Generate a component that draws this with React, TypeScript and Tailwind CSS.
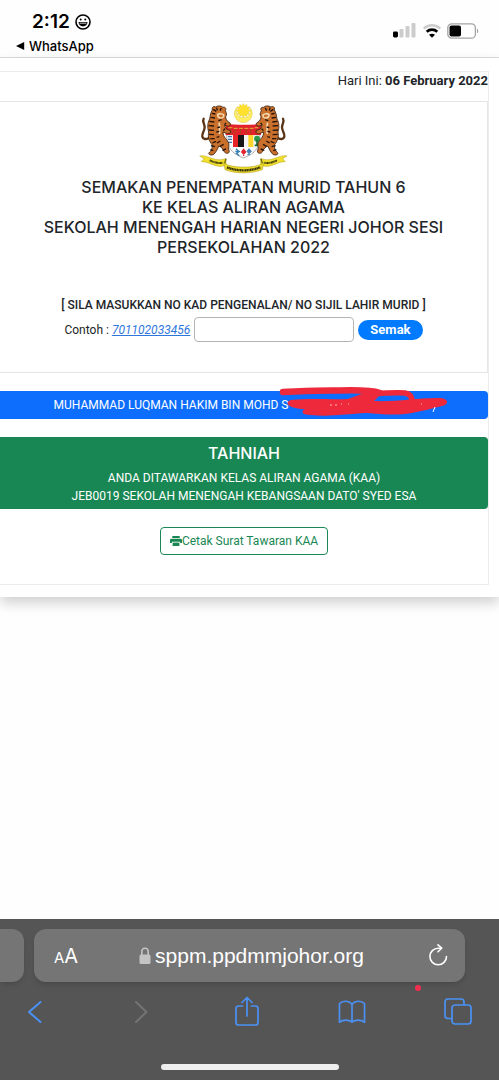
import { useState } from 'react';

function StatusBar() {
  return (
    <header className="flex h-[58px] justify-between border-b border-[#dcdcdc] pl-4 pr-5">
      <div className="pt-3">
        <div className="flex items-center gap-1 pl-4 text-[19px] font-semibold leading-5">
          <span>2:12</span>
          <svg width="18" height="18" viewBox="0 0 18 18" fill="none">
            <circle cx="9" cy="9" r="7" stroke="#000" strokeWidth="1.6" />
            <circle cx="6.7" cy="6.4" r="1" fill="#000" />
            <circle cx="11.3" cy="6.4" r="1" fill="#000" />
            <path d="M4.500 9h9c0 2.800-2 4.400-4.500 4.400S4.500 11.800 4.500 9z" fill="#000" />
            <path d="M5.6 10.200h6.8" stroke="#fff" strokeWidth=".8" />
          </svg>
        </div>
        <a href="#whatsapp" className="flex items-center gap-1 pt-1 text-[13px] font-medium leading-5">
          <svg width="9" height="8" viewBox="0 0 9 8">
            <path d="M0 4 8.2 0v8z" fill="#000" />
          </svg>
          WhatsApp
        </a>
      </div>
      <div className="flex items-center gap-1.5 pt-1">
        <svg width="24" height="15" viewBox="0 0 24 15">
          <rect x="0" y="8.5" width="5" height="6" rx="1.4" fill="#000" />
          <rect x="6.5" y="6" width="4" height="8.5" rx="1" fill="#ccc" />
          <rect x="12.5" y="3" width="4" height="11.5" rx="1" fill="#ccc" />
          <rect x="18.5" y="0" width="4" height="14.5" rx="1" fill="#ccc" />
        </svg>
        <svg width="18" height="14" viewBox="0 0 18 14" fill="none">
          <path d="M.8 4.5c4.6-4.3 11.8-4.3 16.4 0" stroke="#ccc" strokeWidth="2.4" />
          <path d="M3.7 7.7c3-2.8 7.6-2.8 10.6 0" stroke="#000" strokeWidth="2.6" />
          <path d="m9 13.8-3-3c1.7-1.5 4.3-1.5 6 0z" fill="#000" />
        </svg>
        <svg width="32" height="16" viewBox="0 0 32 16" fill="none">
          <rect x=".8" y=".8" width="27.6" height="14.4" rx="4" stroke="#a3a3a3" strokeWidth="1.3" />
          <rect x="2.5" y="2.5" width="11.5" height="11" rx="2" fill="#000" />
          <path d="M30 5.5c1.6.8 1.6 4.2 0 5z" fill="#a3a3a3" />
        </svg>
      </div>
    </header>
  );
}

function Tiger() {
  return (
    <g>
      <path d="M68 70c-5 8 3 16 3 26 0 11-9 17-7 28 2 7 9 9 18 5" fill="none" stroke="#5a3417" strokeWidth="7" strokeLinecap="round" />
      <path
        d="M94 44c-2-9 4-13 10-9 8-5 17-4 22 1 7-2 11 4 7 10 4 8 5 12 1 18 0 6 2 9 6 14l8 6c2 7-4 10-10 8l-8-3 6 12 12 5c3 6-2 10-9 9l-13-5c0 8 3 14 8 20 9 9 12 17 8 27l3 13c-4 6-13 5-16-2-3-9-9-13-16-16-3 10-9 20-16 26-9 3-18-1-11-8 6-4 8-12 8-21-10-12-14-25-11-39-4-13-4-27 3-39 2-11 3-20 8-27z"
        fill="#c8702c"
        stroke="#3a200d"
        strokeWidth="2.5"
      />
      <path d="M110 58c4-4 14-4 18 1 1 6-3 9-9 9-6-1-9-4-9-10zM114 82c4 10 0 22 2 34" fill="none" stroke="#f4d8ae" strokeWidth="5" />
      <path
        d="M97 42l9 6M107 37l2 8M121 38l-4 8M93 54l10 2M89 66l13 2M85 78l15 2M83 91l16 1M83 104l16 1M84 117l15 1M88 130l13 0M94 143l11-5M108 143l10-6M117 153l11-6M124 165l11-4M112 76l10-3M131 88l4-5M109 97l8-2M127 106l5-6M106 110l9-2M102 154l-12-3M97 166l-9-3M107 126l8-2"
        stroke="#24130a"
        strokeWidth="4"
      />
    </g>
  );
}

function Crest() {
  return (
    <svg width="94" height="72" viewBox="48 20 282 216" role="img" aria-label="Jata Negara">
      <path d="M170 34a27 27 0 1 0 34 0c10 15 2 33-17 33s-27-18-17-33z" fill="#ffee62" stroke="#d5c652" strokeWidth="1.5" />
      <path
        d="m187 24 4 7 7-4 0 8 8 0-4 7 7 4-7 4 4 7-8 0 0 7-7-4-4 7-4-7-7 4 0-7-8 0 4-7-7-4 7-4-4-7 8 0 0-8 7 4z"
        fill="#ffe02c"
        stroke="#d8c63a"
        strokeWidth="1"
      />
      <path d="M137 118h100c1 36-12 56-50 70-37-14-51-34-50-70z" fill="#f7f7f7" stroke="#8c8c8c" strokeWidth="2" />
      <path d="M134 86c30 3 76 3 106 0v33H134z" fill="#e3212b" />
      <path d="M148 96l5 19M164 96l-3 19M179 96v19M196 96v19M211 95l-2 19M227 95l-3 19" stroke="#9c4a1d" strokeWidth="3" />
      <path d="M142 97h12M158 99h12M174 99h12M190 99h12M206 99h12M221 97h11" stroke="#e5b03a" strokeWidth="3" />
      <path d="M156 119h15v36h-15z" fill="#e52329" />
      <path d="M171 119h18v36h-18z" fill="#171717" />
      <path d="M189 119h13v36h-13z" fill="#f4f4f4" />
      <path d="M202 119h15v36h-15z" fill="#fbd72b" />
      <path d="M141 124h12M141 132h12M142 141h11" stroke="#3c78b5" strokeWidth="4" />
      <circle cx="228" cy="130" r="9" fill="#2b9b49" />
      <path d="M228 133v15M221 150h12" stroke="#167134" strokeWidth="5" />
      <path d="M157 155h60c-5 14-14 24-30 30-16-6-26-16-30-30z" fill="#fff" />
      <path d="M165 160l9 9-8 5 9 7M163 168h14" stroke="#3a80b5" strokeWidth="4" fill="none" />
      <path d="M188 162l6 8-6 6-6-6zM188 174v8" fill="#e6252f" stroke="#df2732" strokeWidth="4" />
      <path d="M204 160l7 8-7 7-6-7zM199 178h8" fill="#477fbd" stroke="#397bad" strokeWidth="3" />
      <Tiger />
      <g transform="matrix(-1 0 0 1 374 0)">
        <Tiger />
      </g>
      <path
        d="M56 182c15-4 31 6 47 10 12 3 22 0 32-2v19c-9 4-18 6-27 3-17-4-31-14-47-13l8-9zM318 182c-15-4-31 6-47 10-12 3-22 0-32-2v19c9 4 18 6 27 3 17-4 31-14 47-13l-8-9z"
        fill="#f1df2d"
        stroke="#b4a320"
        strokeWidth="1.5"
      />
      <path d="M128 201c14 12 36 14 60 14s46-2 60-14l-4 22c-34 13-78 13-112 0z" fill="#eedb2b" stroke="#a59619" strokeWidth="1.5" />
      <path d="M135 190l-4 14M240 190l4 14" stroke="#736b10" strokeWidth="4" />
      <path d="M86 195c14 6 26 10 39 7M250 202c13 3 25-1 38-7" fill="none" stroke="#37320c" strokeWidth="6" strokeDasharray="3 1" />
      <path d="M138 216c30 12 70 12 100 0" fill="none" stroke="#37320c" strokeWidth="7" strokeDasharray="4 1" />
    </svg>
  );
}

// marker strokes over the rest of the name
function Scribble() {
  return (
    <svg className="absolute -left-3 -top-2 h-8 w-[176px]" viewBox="0 0 176 32" fill="none" aria-hidden="true">
      <path d="M7 5C30 4 45 3 64 3.500C83 3 98 4 104 6" stroke="#ee293c" strokeWidth="6.500" strokeLinecap="round" />
      <path d="M90 7C108 6 122 5 129 6C134 7 136 10 136 14" stroke="#ee293c" strokeWidth="5.500" strokeLinecap="round" />
      <path
        d="M72 12L88 6L104 8L98 14C120 15 140 11 160 11C173 10 174 17 166 19C155 22 145 24 136 26C120 29 104 27 91 26C70 27 53 30 35 28C25 28 25 24 29 22C14 22 7 16 15 13C36 11 57 13 72 12Z"
        fill="#ee293c"
      />
      <path d="M54 18h2M59 18h2M65 17h1M72 17h1M145 17h1" stroke="#fbb" strokeWidth="1" />
      <path d="M159 20l-2 5" stroke="#fff" strokeWidth="1" />
    </svg>
  );
}

function Printer() {
  return (
    <svg width="12" height="10" viewBox="0 0 12 10" fill="currentColor">
      <path d="M2.300 0h7.400v2H2.300z" />
      <path d="M1.500 2.800h9c.9 0 1.500.6 1.500 1.400v2.900h-1.900V5.800H1.900v1.300H0V4.200c0-.8.6-1.400 1.500-1.400z" />
      <path d="M2.600 6.600h6.800V10H2.600z" />
    </svg>
  );
}

function BrowserBar() {
  return (
    <footer className="flex h-[161px] flex-col overflow-hidden bg-[#555] text-white">
      <div className="flex pt-[10px]">
        <div className="h-[53px] w-6 rounded-r-xl bg-[#757575] shadow-md" />
        <div className="ml-[10px] mr-[34px] flex h-[53px] flex-1 items-center justify-between rounded-xl bg-[#757575] pl-5 pr-4 shadow-md">
          <button type="button" aria-label="AA" className="flex w-7 items-baseline">
            <span className="text-[15px]">A</span>
            <span className="text-xl">A</span>
          </button>
          <div className="flex items-center gap-1 font-['Liberation_Sans',sans-serif] text-[21px]">
            <svg width="12" height="18" viewBox="0 0 12 18" fill="none">
              <path d="M2.8 8V5c0-5 6.400-5 6.400 0v3" stroke="#c4c4c4" strokeWidth="1.6" />
              <rect x=".5" y="7.5" width="11" height="9.5" rx="1.5" fill="#c4c4c4" />
            </svg>
            <span>sppm.ppdmmjohor.org</span>
          </div>
          <button type="button" aria-label="Reload" className="flex w-7 justify-end">
            <svg width="22" height="24" viewBox="0 0 22 24" fill="none" stroke="#fff" strokeWidth="1.6" strokeLinecap="round" strokeLinejoin="round">
              <path d="M19.500 12.500a8.300 8.300 0 1 1-8.300-8.300h3" />
              <path d="m11 .8 3.700 3.400-3.700 3.600" />
            </svg>
          </button>
        </div>
      </div>
      <nav className="relative flex items-center justify-between pl-[21px] pr-[27px] pt-[14px] text-[#4b91f5]">
        <span className="absolute right-[78px] top-[3px] size-[6px] rounded-full bg-[#f32d50]" />
        <button type="button" aria-label="Back" className="flex w-7 justify-center">
          <svg width="22" height="30" viewBox="0 0 22 30" fill="none" stroke="currentColor" strokeWidth="2" strokeLinecap="round" strokeLinejoin="round">
            <path d="M16.5 5 5 15l11.500 10" />
          </svg>
        </button>
        <button type="button" aria-label="Forward" className="flex w-7 justify-center text-[#747474]">
          <svg width="22" height="30" viewBox="0 0 22 30" fill="none" stroke="currentColor" strokeWidth="2" strokeLinecap="round" strokeLinejoin="round">
            <path d="M6 5 16.500 15 6 25" />
          </svg>
        </button>
        <button type="button" aria-label="Share" className="flex w-7 justify-center">
          <svg width="26" height="32" viewBox="0 0 26 32" fill="none" stroke="currentColor" strokeWidth="1.7" strokeLinecap="round" strokeLinejoin="round">
            <path d="M8.500 10H4.500C3 10 2 11 2 12.500v14C2 28 3 29 4.500 29h17c1.500 0 2.500-1 2.500-2.500v-14c0-1.500-1-2.500-2.500-2.500h-4M13 20V1.500M8 6.500l5-5 5 5" />
          </svg>
        </button>
        <button type="button" aria-label="Bookmarks" className="flex w-7 justify-center">
          <svg width="28" height="26" viewBox="0 0 30 28" fill="none" stroke="currentColor" strokeWidth="1.8" strokeLinejoin="round">
            <path d="M15 5.500C11.500 1.500 5 1.500 1.500 5v20c4-3 10-3 13.500 0V5.500C18.500 1.500 25 1.500 28.500 5v20c-4-3-10-3-13.500 0" />
          </svg>
        </button>
        <button type="button" aria-label="Tabs" className="flex w-7 justify-center">
          <svg width="28" height="28" viewBox="0 0 28 28" fill="none" stroke="currentColor" strokeWidth="1.7">
            <path d="M8 20.500H4c-1.700 0-3-1.300-3-3V4c0-1.700 1.300-3 3-3h13c1.700 0 3 1.300 3 3v3" />
            <rect x="8" y="7" width="19" height="19" rx="3" />
          </svg>
        </button>
      </nav>
      <div className="mx-auto mb-[10px] mt-auto h-[6px] w-[178px] rounded-full bg-[#efefef]" />
    </footer>
  );
}

export default function App() {
  const [noKp, setNoKp] = useState('');

  return (
    <div className="flex min-h-screen flex-col bg-[#fefefe] font-['Inter',sans-serif] text-black">
      <StatusBar />
      <main className="flex-1 font-['Roboto',sans-serif] text-[12px] leading-[18px] text-[#212529]">
        <div className="bg-white pb-3 pr-[10px] pt-[13px] shadow-[0_6px_12px_rgba(0,0,0,0.18)]">
          <section className="border-y border-r border-[#ededed]">
            <div className="h-[29px] text-right text-[13px]">
              Hari Ini: <b>06 February 2022</b>
            </div>

            <div className="border-y border-r border-[#e6e6e6] pb-[30px] text-center">
              <div className="flex justify-center">
                <Crest />
              </div>
              <h1 className="pt-[3px] font-['Inter',sans-serif] text-[16px] font-medium leading-5">
                SEMAKAN PENEMPATAN MURID TAHUN 6<br />
                KE KELAS ALIRAN AGAMA<br />
                SEKOLAH MENENGAH HARIAN NEGERI JOHOR SESI<br />
                PERSEKOLAHAN 2022
              </h1>
              <form onSubmit={(e) => e.preventDefault()} className="pt-[39px]">
                <label htmlFor="nokp" className="block font-medium">
                  [ SILA MASUKKAN NO KAD PENGENALAN/ NO SIJIL LAHIR MURID ]
                </label>
                <div className="flex items-center justify-center gap-1 pt-[3px]">
                  <span>
                    Contoh : <a href="#contoh" className="italic text-[#2f76dc] underline">701102033456</a>
                  </span>
                  <input
                    id="nokp"
                    type="text"
                    value={noKp}
                    onChange={(e) => setNoKp(e.target.value)}
                    className="h-[25px] w-40 rounded border border-[#b5b5b5] bg-white px-2"
                  />
                  <button type="submit" className="h-5 rounded-full bg-[#007bff] px-3 text-[13px] font-bold text-white">
                    Semak
                  </button>
                </div>
              </form>
            </div>

            <div className="mt-[18px] flex h-7 items-center justify-center rounded-r bg-[#0d6efd] text-white">
              <span>MUHAMMAD LUQMAN HAKIM BIN MOHD S</span>
              <span className="relative h-5 w-[146px]">
                <Scribble />
              </span>
            </div>

            <div className="mt-[18px] rounded-r bg-[#198754] pb-1 pt-[6px] text-center text-white">
              <h2 className="pb-[6px] font-['Inter',sans-serif] text-[16px] font-medium leading-5">TAHNIAH</h2>
              <p>ANDA DITAWARKAN KELAS ALIRAN AGAMA (KAA)</p>
              <p>JEB0019 SEKOLAH MENENGAH KEBANGSAAN DATO' SYED ESA</p>
            </div>

            <div className="flex justify-center pb-[29px] pt-[18px]">
              <button type="button" className="flex h-7 items-center rounded border border-[#198754] px-[9px] text-[#198754]">
                <Printer />
                Cetak Surat Tawaran KAA
              </button>
            </div>
          </section>
        </div>
      </main>
      <BrowserBar />
    </div>
  );
}
